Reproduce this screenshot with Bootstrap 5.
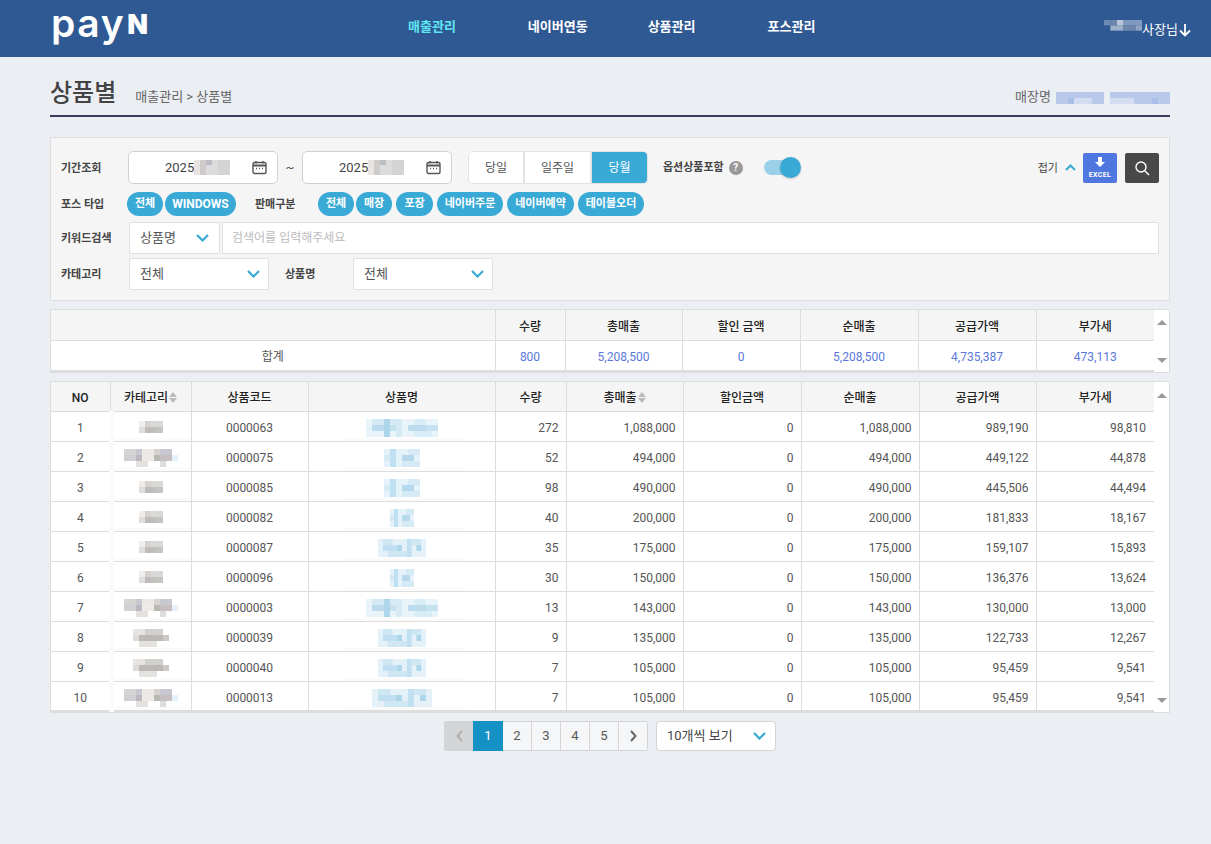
<!DOCTYPE html>
<html lang="ko">
<head>
<meta charset="utf-8">
<title>상품별</title>
<link href="https://cdn.jsdelivr.net/npm/bootstrap@5.3.0/dist/css/bootstrap.min.css" rel="stylesheet">
<style>
body{background:#ebeef3;font-family:Roboto,"Noto Sans CJK KR",sans-serif;font-size:12px;color:#555;min-height:844px;margin:0}
.wrap-x{width:1120px;margin:0 0 0 50px}
.topbar{background:#2f5993;height:57px}
.brand-mark{color:#fff;font-family:Inter,sans-serif;font-size:39px;line-height:46px;height:46px;font-weight:600;letter-spacing:1.6px;margin-left:1px;width:101px;flex:none}
.brand-mark b{font-weight:900;font-size:27px;letter-spacing:0;margin-left:2px;vertical-align:3px;line-height:20px}
.main-nav{margin-left:256px;gap:60px;font-size:13px;font-weight:700;color:#fff;padding-top:17px}
.main-nav .on{color:#5fe6f2}
.wide-after{margin-right:12px}
.user-box{margin-left:auto;color:#fff;font-size:13px;padding-top:20px;margin-right:-22px}
.user-blur{margin-bottom:4px}
.page-head{height:60px;border-bottom:2px solid #3b3b5c;margin-bottom:20px;padding-top:18px}
.page-head h1{font-size:24px;font-weight:500;color:#444;margin:0;line-height:36px}
.crumb{font-size:13px;color:#666;margin-left:19px;padding-top:12px}
.store-name{margin-left:auto;font-size:13px;color:#666;padding-top:12px}
.store-blur{margin-left:5px;vertical-align:-2px}
.filter-panel{background:#f5f5f5;border:1px solid #ddd;height:164px;padding:13px 10px 0}
.f-label{font-size:11px;font-weight:700;color:#444;width:67px;flex:none;padding-top:3px}
.f-row{display:flex;align-items:center}
.date-box{width:150px;height:33px;background:#fff;border:1px solid #ccd2da;border-radius:5px;color:#444;font-size:13px;padding-left:36px;padding-right:10px;display:flex;align-items:center;flex:none}
.tilde{width:24px;text-align:center;font-size:13px;flex:none}
.seg{margin-left:16px;height:33px;background:#e3e3e3;border:1px solid #e3e3e3;border-radius:5px;padding:0;gap:2px;overflow:hidden}
.seg span{background:#fff;display:flex;align-items:center;justify-content:center;height:100%;font-size:12px;color:#555;padding-top:1px}
.seg .s1{width:54px}.seg .s2{width:65px}.seg .s3{width:55px;background:#39a9d6;color:#fff}
.opt-label{font-size:11px;font-weight:700;color:#444;margin-left:15px;padding-top:2px}
.help-dot{width:14px;height:14px;border-radius:50%;background:#999;color:#fff;font-size:10px;font-weight:700;text-align:center;line-height:14px;margin-left:5px}
.toggle-track{width:26px;height:15px;border-radius:8px;background:#9ad0e8;margin-left:21px;position:relative}
.toggle-track i{position:absolute;width:21px;height:21px;border-radius:50%;background:#39a9d6;right:-11px;top:-3px;box-shadow:0 1px 2px rgba(0,0,0,.2)}
.fold-txt{margin-left:auto;font-size:11px;color:#444;margin-right:7px;padding-top:3px}
.xl-btn{width:34px;height:30px;background:#4f77e0;border-radius:2px;color:#fff;font-size:7px;font-weight:700;letter-spacing:.4px;display:flex;flex-direction:column;align-items:center;justify-content:center;margin-left:7px;line-height:8px;padding:0}
.find-btn{width:34px;height:30px;background:#484848;border-radius:2px;margin-left:8px;display:flex;align-items:center;justify-content:center}
.chip{background:#39a9d6;color:#fff;border-radius:12px;height:24px;font-size:11px;font-weight:700;display:flex;align-items:center;justify-content:center;padding:0;flex:none;white-space:nowrap}
.chip-en{font-size:12px}
.chip-gap{gap:4px}.chip-gap .chip:first-child{margin-right:-2px}
.pick-box{background:#fff;border:1px solid #e0e0e0;height:32px;font-size:13px;color:#555;border-radius:2px;padding:0 8px 0 10px;display:flex;align-items:center;justify-content:space-between;flex:none}
.w-91{width:91px;padding-right:10px}.w-140{width:140px}
.kw-input{flex:1;height:32px;background:#fff;border:1px solid #e0e0e0;margin-left:2px;font-size:12px;color:#bbb;padding:0 9px;display:flex;align-items:center}
.ml-16{margin-left:16px}.w-68{width:68px;flex:none}
.pills-row{margin-top:8px}.kw-row{margin-top:6px}.cat-row{margin-top:4px}
.lbl-pos{width:66px}.gap-pos{gap:2px}.lbl-sale{width:63px;margin-left:19px}
.w36{width:36px}.w37{width:37px}.w66{width:66px}.w67{width:67px}.w71{width:71px}
.grid-shell{background:#fff;border:1px solid #ddd;display:flex;margin-top:8px}
.grid-shell table{table-layout:fixed;border-collapse:collapse;width:1103px;flex:none;margin:0}
.grid-shell th{background:#f5f5f5;font-weight:500;color:#222;font-size:12px;text-align:center;border:1px solid #ddd;border-top:0;padding:4px 0 0;height:30px}
.grid-shell td{border:1px solid #ddd;padding:4px 0 0;height:30px;font-size:12px;text-align:center;color:#555;position:relative}
.grid-shell th:first-child,.grid-shell td:first-child{border-left:0}
.grid-shell th:last-child,.grid-shell td:last-child{border-right:0}
.sum-row td{height:31px;border-bottom:2px solid #ddd}
.sum-row .blue{color:#5a78dc}
.sum-row .tot{color:#555}
.num{text-align:right!important;padding-right:7px!important}
.grid-shell td.num:last-child{padding-right:8px!important}
.c-no{width:59px}.c-cat{width:81px}.c-code{width:117px}.c-name{width:187px}.c-q{width:71px}.c-a{width:117px}.c-b{width:118px}
.s-first{width:444px}.s-q{width:70px}.s-a{width:117px}.s-b{width:118px}
.main-table th{height:29px}
.main-table tbody tr:last-child td{border-bottom:2px solid #ddd}
.main-table .mos-top{margin-bottom:4px}
.rail{width:15px;display:flex;flex-direction:column;justify-content:space-between;align-items:center;padding:10px 0 9px}
.rail-main{padding-top:11px}
.tri-up,.tri-dn{width:0;height:0;border-left:5.5px solid transparent;border-right:5.5px solid transparent}
.tri-up{border-bottom:5px solid #999}.tri-dn{border-top:5px solid #999}
.sort-mark{display:inline-block;vertical-align:-1px;margin-left:1px}
.mos{display:inline-block;vertical-align:middle}
.smear-cat::before{content:"";position:absolute;left:-2px;top:-1px;width:5px;height:31px;background:#fbfbfb}
.smear-cat::after{content:"";position:absolute;left:-2px;right:0;bottom:0;height:3px;background:#fbfbfb}
.smear-name::after{content:"";position:absolute;left:35px;width:121px;bottom:0;height:3px;background:#fbfbfb}
.pager-row{margin-top:8px;gap:8px}
.pager-row .pagination{margin:0;--bs-pagination-padding-x:0;--bs-pagination-padding-y:0;--bs-pagination-font-size:13px;--bs-pagination-color:#555;--bs-pagination-bg:#f5f6f8;--bs-pagination-border-color:#d5d5d5;--bs-pagination-border-radius:2px;--bs-pagination-active-bg:#1591c5;--bs-pagination-active-border-color:#1591c5;--bs-pagination-disabled-bg:#d2d4d6;--bs-pagination-disabled-color:#aaa;--bs-pagination-disabled-border-color:#d2d4d6}
.pager-row .page-link{width:30px;height:30px;display:flex;align-items:center;justify-content:center}
.per-box{width:120px;height:30px;background:#fff;border:1px solid #d5d5d5;border-radius:4px;font-size:13px;color:#444;display:flex;align-items:center;justify-content:space-between;padding:0 9px 0 10px}
.hide-defs{position:absolute}
</style>
</head>
<body>
<svg width="0" height="0" class="hide-defs" aria-hidden="true">
<defs>
<symbol id="cs" viewBox="0 0 24 12" preserveAspectRatio="none"><path fill="#f0ecea" d="M0 0h6v6H0z"/><path fill="#d4d1cf" d="M6 0h6v6H6z"/><path fill="#dad9d5" d="M12 0h6v6h-6z"/><path fill="#d8d8d8" d="M18 0h6v6h-6z"/><path fill="#e0dedc" d="M0 6h6v6H0z"/><path fill="#bdbbbb" d="M6 6h6v6H6z"/><path fill="#c2c0bc" d="M12 6h6v6h-6z"/><path fill="#c4c4c4" d="M18 6h6v6h-6z"/></symbol>
<symbol id="cl" viewBox="0 0 54 18" preserveAspectRatio="none"><path fill="#d6d3d3" d="M0 0h12v6H0zM30 0h6v6h-6z"/><path fill="#c8c8d0" d="M12 0h6v6h-6zM36 0h12v6H36z"/><path fill="#ece8e4" d="M18 0h12v6H18z"/><path fill="#d0cfd3" d="M0 6h12v6H0z"/><path fill="#bbb9bf" d="M12 6h6v6h-6z"/><path fill="#eeeae8" d="M18 6h12v6H18z"/><path fill="#b9b8b0" d="M30 6h6v6h-6z"/><path fill="#c8c0c0" d="M36 6h12v6H36z"/><path fill="#e6f2fa" d="M48 6h6v6h-6z"/><path fill="#e4e2e0" d="M12 12h12v6H12z"/><path fill="#dedcdc" d="M36 12h6v6h-6z"/></symbol>
<symbol id="cm" viewBox="0 0 36 18" preserveAspectRatio="none"><path fill="#e8e4e2" d="M0 0h12v6H0z"/><path fill="#d2d0cc" d="M12 0h18v6H12z"/><path fill="#dedcd8" d="M0 6h6v6H0z"/><path fill="#bdb9b6" d="M6 6h24v6H6z"/><path fill="#ccc9c6" d="M30 6h6v6h-6z"/><path fill="#e4e2de" d="M6 12h18v6H6z"/></symbol>
<symbol id="pl" viewBox="0 0 72 18" preserveAspectRatio="none"><path fill="#e8f4fa" d="M0 0h72v18H0z"/><path fill="#d6eaf5" d="M6 0h12v6H6zM24 0h6v6h-6zM30 0h6v18h-6z"/><path fill="#bcdcee" d="M6 6h12v6H6zM42 6h18v6H42z"/><path fill="#aed6ea" d="M18 0h6v18h-6z"/><path fill="#c6e2f1" d="M24 6h6v6h-6zM60 6h12v6H60z"/><path fill="#d9edf7" d="M48 0h12v6H48zM48 12h18v6H48z"/></symbol>
<symbol id="pm" viewBox="0 0 36 18" preserveAspectRatio="none"><path fill="#e6f2f9" d="M0 0h36v18H0z"/><path fill="#bfe0f0" d="M6 0h6v18H6z"/><path fill="#b6d9ed" d="M18 6h12v6H18z"/><path fill="#d6eaf5" d="M24 0h12v6H24zM18 12h18v6H18zM0 6h6v6H0z"/></symbol>
<symbol id="pw" viewBox="0 0 60 18" preserveAspectRatio="none"><path fill="#e4f1f9" d="M0 0h60v18H0z"/><path fill="#cfe6f3" d="M6 0h12v6H6zM42 0h12v6H42zM12 12h24v6H12z"/><path fill="#c0dff0" d="M6 6h18v6H6zM36 0h6v18h-6z"/><path fill="#aed6ea" d="M24 6h6v6h-6zM48 6h6v6h-6z"/></symbol>
<symbol id="ub" viewBox="0 0 36 18" preserveAspectRatio="none"><path fill="#6d8ab5" d="M0 0h6v6H0z"/><path fill="#9db0cc" d="M6 6h12v6H6z"/><path fill="#bac6d8" d="M12 0h6v6h-6z"/><path fill="#7f99bf" d="M18 0h18v6H18z"/><path fill="#6d87ad" d="M6 0h6v6H6zM18 6h12v6H18z"/><path fill="#8fa3c2" d="M30 6h6v6h-6z"/></symbol>
<symbol id="sn" viewBox="0 0 114 12" preserveAspectRatio="none"><path fill="#b9c9ea" d="M0 0h114v12H0z"/><path fill="#d3dcf0" d="M12 6h24v6H12zM54 6h24v6H54z"/><path fill="#ebeef3" d="M48 0h6v12h-6z"/><path fill="#a9bfe8" d="M12 6h6v6h-6zM96 6h6v6h-6z"/></symbol>
<symbol id="dt" viewBox="0 0 36 15" preserveAspectRatio="none"><path fill="#e8e4e2" d="M0 0h6v15H0z"/><path fill="#cfcbcb" d="M6 0h6v15H6z"/><path fill="#dcdcdc" d="M12 0h12v15H12z"/><path fill="#d4d4d4" d="M24 0h12v15H24z"/><path fill="#bcbcc4" d="M12 0h6v5h-6z"/></symbol>
</defs>
</svg>

<header class="topbar">
<div class="wrap-x d-flex">
<div class="brand-mark text-nowrap">pay<b>N</b></div>
<nav class="main-nav d-flex">
<span class="on wide-after">매출관리</span>
<span>네이버연동</span>
<span class="wide-after">상품관리</span>
<span>포스관리</span>
</nav>
<div class="user-box d-flex align-items-center align-self-start">
<svg class="mos user-blur" width="38" height="16"><use href="#ub"/></svg>사장님<svg width="14" height="14" viewBox="0 0 14 14" fill="none" stroke="#fff" stroke-width="1.8"><path d="M7 1v11M2 7.5 7 12.5l5-5"/></svg>
</div>
</div>
</header>

<main class="wrap-x">
<div class="page-head d-flex">
<h1>상품별</h1>
<div class="crumb">매출관리 &gt; 상품별</div>
<div class="store-name">매장명<svg class="mos store-blur" width="114" height="12"><use href="#sn"/></svg></div>
</div>

<section class="filter-panel">
<div class="f-row">
<span class="f-label">기간조회</span>
<div class="date-box">2025<svg class="mos" width="36" height="15"><use href="#dt"/></svg>
<svg class="ms-auto" width="15" height="15" viewBox="0 0 15 15" fill="none" stroke="#555" stroke-width="1.4"><rect x="1" y="2.5" width="13" height="11" rx="1.5"/><path d="M1 5.5h13" stroke-width="2"/><path d="M4 1v2.5M11 1v2.5M4 8.5h1M7 8.5h1M10 8.5h1"/></svg></div>
<span class="tilde">~</span>
<div class="date-box">2025<svg class="mos" width="36" height="15"><use href="#dt"/></svg>
<svg class="ms-auto" width="15" height="15" viewBox="0 0 15 15" fill="none" stroke="#555" stroke-width="1.4"><rect x="1" y="2.5" width="13" height="11" rx="1.5"/><path d="M1 5.5h13" stroke-width="2"/><path d="M4 1v2.5M11 1v2.5M4 8.5h1M7 8.5h1M10 8.5h1"/></svg></div>
<div class="seg d-flex"><span class="s1">당일</span><span class="s2">일주일</span><span class="s3">당월</span></div>
<span class="opt-label">옵션상품포함</span><span class="help-dot">?</span>
<span class="toggle-track"><i></i></span>
<span class="fold-txt">접기</span>
<svg width="11" height="7" viewBox="0 0 11 7" fill="none" stroke="#39a9d6" stroke-width="2"><path d="M1 6l4.5-4.5L10 6"/></svg>
<span class="xl-btn"><svg width="10" height="10" viewBox="0 0 10 10" fill="#fff"><path d="M3 0h4v5h3L5 10 0 5h3z"/></svg><span class="mt-1">EXCEL</span></span>
<span class="find-btn"><svg width="16" height="16" viewBox="0 0 16 16" fill="none" stroke="#fff" stroke-width="1.4"><circle cx="7" cy="7" r="5"/><path d="M10.7 10.7 15 15"/></svg></span>
</div>

<div class="f-row pills-row">
<span class="f-label lbl-pos">포스 타입</span>
<div class="d-flex gap-pos"><span class="chip w36">전체</span><span class="chip chip-en w71">WINDOWS</span></div>
<span class="f-label lbl-sale">판매구분</span>
<div class="d-flex chip-gap"><span class="chip w36">전체</span><span class="chip w36">매장</span><span class="chip w37">포장</span><span class="chip w66">네이버주문</span><span class="chip w67">네이버예약</span><span class="chip w66">테이블오더</span></div>
</div>

<div class="f-row kw-row">
<span class="f-label w-68">키워드검색</span>
<div class="pick-box w-91">상품명<svg width="13" height="8" viewBox="0 0 13 8" fill="none" stroke="#39a9d6" stroke-width="2.2"><path d="M1 1l5.5 5.5L12 1"/></svg></div>
<div class="kw-input">검색어를 입력해주세요</div>
</div>

<div class="f-row cat-row">
<span class="f-label w-68">카테고리</span>
<div class="pick-box w-140">전체<svg width="13" height="8" viewBox="0 0 13 8" fill="none" stroke="#39a9d6" stroke-width="2.2"><path d="M1 1l5.5 5.5L12 1"/></svg></div>
<span class="f-label ml-16 w-68">상품명</span>
<div class="pick-box w-140">전체<svg width="13" height="8" viewBox="0 0 13 8" fill="none" stroke="#39a9d6" stroke-width="2.2"><path d="M1 1l5.5 5.5L12 1"/></svg></div>
</div>
</section>

<section class="grid-shell">
<table class="sum-table">
<colgroup><col class="s-first"><col class="s-q"><col class="s-a"><col class="s-b"><col class="s-b"><col class="s-b"><col></colgroup>
<thead><tr><th></th><th>수량</th><th>총매출</th><th>할인 금액</th><th>순매출</th><th>공급가액</th><th>부가세</th></tr></thead>
<tbody><tr class="sum-row"><td class="tot">합계</td><td class="blue">800</td><td class="blue">5,208,500</td><td class="blue">0</td><td class="blue">5,208,500</td><td class="blue">4,735,387</td><td class="blue">473,113</td></tr></tbody>
</table>
<div class="rail"><span class="tri-up"></span><span class="tri-dn"></span></div>
</section>

<section class="grid-shell">
<table class="main-table">
<colgroup><col class="c-no"><col class="c-cat"><col class="c-code"><col class="c-name"><col class="c-q"><col class="c-a"><col class="c-b"><col class="c-b"><col class="c-a"><col></colgroup>
<thead><tr><th>NO</th><th>카테고리<svg class="sort-mark" width="8" height="11" viewBox="0 0 8 11" fill="#bbb"><path d="M4 0l4 5H0zM4 11l4-5H0z"/></svg></th><th>상품코드</th><th>상품명</th><th>수량</th><th>총매출<svg class="sort-mark" width="8" height="11" viewBox="0 0 8 11" fill="#bbb"><path d="M4 0l4 5H0zM4 11l4-5H0z"/></svg></th><th>할인금액</th><th>순매출</th><th>공급가액</th><th>부가세</th></tr></thead>
<tbody>
<tr><td>1</td><td class="smear-cat"><svg class="mos mos-top" width="24" height="12"><use href="#cs"/></svg></td><td>0000063</td><td class="smear-name"><svg class="mos" width="72" height="18"><use href="#pl"/></svg></td><td class="num">272</td><td class="num">1,088,000</td><td class="num">0</td><td class="num">1,088,000</td><td class="num">989,190</td><td class="num">98,810</td></tr>
<tr><td>2</td><td class="smear-cat"><svg class="mos" width="54" height="18"><use href="#cl"/></svg></td><td>0000075</td><td class="smear-name"><svg class="mos" width="36" height="18"><use href="#pm"/></svg></td><td class="num">52</td><td class="num">494,000</td><td class="num">0</td><td class="num">494,000</td><td class="num">449,122</td><td class="num">44,878</td></tr>
<tr><td>3</td><td class="smear-cat"><svg class="mos mos-top" width="24" height="12"><use href="#cs"/></svg></td><td>0000085</td><td class="smear-name"><svg class="mos" width="36" height="18"><use href="#pm"/></svg></td><td class="num">98</td><td class="num">490,000</td><td class="num">0</td><td class="num">490,000</td><td class="num">445,506</td><td class="num">44,494</td></tr>
<tr><td>4</td><td class="smear-cat"><svg class="mos mos-top" width="24" height="12"><use href="#cs"/></svg></td><td>0000082</td><td class="smear-name"><svg class="mos" width="24" height="18"><use href="#pm"/></svg></td><td class="num">40</td><td class="num">200,000</td><td class="num">0</td><td class="num">200,000</td><td class="num">181,833</td><td class="num">18,167</td></tr>
<tr><td>5</td><td class="smear-cat"><svg class="mos mos-top" width="24" height="12"><use href="#cs"/></svg></td><td>0000087</td><td class="smear-name"><svg class="mos" width="48" height="18"><use href="#pw"/></svg></td><td class="num">35</td><td class="num">175,000</td><td class="num">0</td><td class="num">175,000</td><td class="num">159,107</td><td class="num">15,893</td></tr>
<tr><td>6</td><td class="smear-cat"><svg class="mos mos-top" width="24" height="12"><use href="#cs"/></svg></td><td>0000096</td><td class="smear-name"><svg class="mos" width="24" height="18"><use href="#pm"/></svg></td><td class="num">30</td><td class="num">150,000</td><td class="num">0</td><td class="num">150,000</td><td class="num">136,376</td><td class="num">13,624</td></tr>
<tr><td>7</td><td class="smear-cat"><svg class="mos" width="54" height="18"><use href="#cl"/></svg></td><td>0000003</td><td class="smear-name"><svg class="mos" width="72" height="18"><use href="#pl"/></svg></td><td class="num">13</td><td class="num">143,000</td><td class="num">0</td><td class="num">143,000</td><td class="num">130,000</td><td class="num">13,000</td></tr>
<tr><td>8</td><td class="smear-cat"><svg class="mos" width="36" height="18"><use href="#cm"/></svg></td><td>0000039</td><td class="smear-name"><svg class="mos" width="48" height="18"><use href="#pw"/></svg></td><td class="num">9</td><td class="num">135,000</td><td class="num">0</td><td class="num">135,000</td><td class="num">122,733</td><td class="num">12,267</td></tr>
<tr><td>9</td><td class="smear-cat"><svg class="mos" width="36" height="18"><use href="#cm"/></svg></td><td>0000040</td><td class="smear-name"><svg class="mos" width="48" height="18"><use href="#pw"/></svg></td><td class="num">7</td><td class="num">105,000</td><td class="num">0</td><td class="num">105,000</td><td class="num">95,459</td><td class="num">9,541</td></tr>
<tr><td>10</td><td class="smear-cat"><svg class="mos" width="54" height="18"><use href="#cl"/></svg></td><td>0000013</td><td class="smear-name"><svg class="mos" width="60" height="18"><use href="#pw"/></svg></td><td class="num">7</td><td class="num">105,000</td><td class="num">0</td><td class="num">105,000</td><td class="num">95,459</td><td class="num">9,541</td></tr>
</tbody>
</table>
<div class="rail rail-main"><span class="tri-up"></span><span class="tri-dn"></span></div>
</section>

<div class="pager-row d-flex justify-content-center">
<ul class="pagination">
<li class="page-item disabled"><span class="page-link"><svg width="7" height="12" viewBox="0 0 7 12" fill="none" stroke="#b0b0b0" stroke-width="2"><path d="M6 1 1.5 6 6 11"/></svg></span></li>
<li class="page-item active"><span class="page-link">1</span></li>
<li class="page-item"><span class="page-link">2</span></li>
<li class="page-item"><span class="page-link">3</span></li>
<li class="page-item"><span class="page-link">4</span></li>
<li class="page-item"><span class="page-link">5</span></li>
<li class="page-item"><span class="page-link"><svg width="7" height="12" viewBox="0 0 7 12" fill="none" stroke="#666" stroke-width="2"><path d="M1 1l4.5 5L1 11"/></svg></span></li>
</ul>
<div class="per-box">10개씩 보기<svg width="13" height="8" viewBox="0 0 13 8" fill="none" stroke="#39a9d6" stroke-width="2.2"><path d="M1 1l5.5 5.5L12 1"/></svg></div>
</div>
</main>
<script src="https://cdn.jsdelivr.net/npm/bootstrap@5.3.0/dist/js/bootstrap.bundle.min.js"></script>
</body>
</html>
